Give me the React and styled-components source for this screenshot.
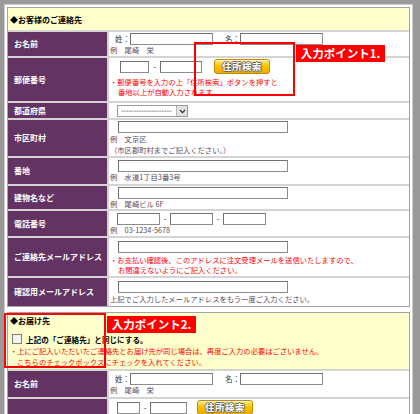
import React from 'react';
import styled, { createGlobalStyle } from 'styled-components';

const Global = createGlobalStyle`
  html, body { margin: 0; padding: 0; background: #9a9a9a; }
  body {
    width: 420px; height: 414px; overflow: hidden;
    font-family: "Noto Sans CJK JP", "Noto Sans", sans-serif;
  }
  * { box-sizing: border-box; }
`;

const Page = styled.div`
  position: relative;
  width: 420px;
  height: 414px;
  overflow: hidden;
  padding: 4px 0 0 4px;
`;

const Frame = styled.div`
  width: 409px;
  height: 440px;
  background: #fff;
  border: 1px solid #cfcfcf;
  padding: 2px;
`;

const Table = styled.div`
  display: grid;
  grid-template-columns: 99px 300px;
  grid-template-rows: ${p => p.$rows};
  gap: 2px;
  width: 403px;
  background: #d4d4d4;
  border: 1px solid #a3a3a3;
  margin-top: ${p => p.$mt || 0}px;
`;

const Header = styled.div`
  grid-column: 1 / -1;
  background: #ffffcc;
  padding: ${p => p.$pt || 0}px 0 0 2px;
  display: flex;
  flex-direction: column;
  justify-content: ${p => (p.$center ? 'center' : 'flex-start')};
  align-items: flex-start;
`;

const HeaderTitle = styled.div`
  font-size: 8px;
  line-height: 11px;
  font-weight: bold;
  color: #000;
  white-space: nowrap;
`;

const Label = styled.div`
  background: #633363;
  color: #fff;
  font-weight: bold;
  font-size: 8px;
  line-height: 10px;
  display: flex;
  align-items: center;
  padding-left: 6px;
  white-space: nowrap;
`;

const Value = styled.div`
  background: #fff;
  padding: ${p => p.$pt ?? 1}px 0 0 1px;
  display: flex;
  flex-direction: column;
  align-items: flex-start;
  overflow: hidden;
`;

const Line = styled.div`
  display: flex;
  align-items: center;
  height: ${p => p.$h || 12}px;
  padding-left: ${p => p.$indent || 0}px;
  margin-bottom: ${p => p.$mb || 0}px;
`;

const Field = styled.input`
  width: ${p => p.$w}px;
  height: 12px;
  margin: 0 ${p => p.$mr || 0}px 0 0;
  padding: 0 2px;
  border: 1px solid #8c8c8c;
  border-top-color: #727272;
  border-left-color: #727272;
  background: #fff;
  font-size: 7px;
  outline: none;
`;

const FieldTag = styled.span`
  font-size: 7.5px;
  line-height: 12px;
  color: #333;
  white-space: nowrap;
`;

const Dash = styled.span`
  width: ${p => p.$w}px;
  text-align: center;
  font-size: 8px;
  line-height: 12px;
  color: #333;
  font-family: "Liberation Sans", sans-serif;
`;

const Example = styled.div`
  font-size: 7.3px;
  line-height: 11px;
  color: #5a4a5a;
  white-space: nowrap;
`;

const Note = styled.div`
  font-size: 7.3px;
  line-height: ${p => p.$lh || 10}px;
  color: #f00;
  padding-left: ${p => p.$indent || 0}px;
  white-space: nowrap;
`;

const SearchButton = styled.button`
  width: 56px;
  height: 15px;
  margin: 0 0 0 ${p => p.$ml || 0}px;
  padding: 0;
  border: 1px solid #c08a00;
  border-radius: 3px;
  background: linear-gradient(#ffe98a 0%, #f8c400 45%, #eeaa00 100%);
  box-shadow: inset 0 1px 0 rgba(255, 255, 255, 0.7);
  color: #fff;
  font-family: "Noto Sans CJK JP", sans-serif;
  font-weight: bold;
  font-size: 9.5px;
  line-height: 13px;
  letter-spacing: 0.5px;
  text-shadow: -1px 0 #666, 1px 0 #666, 0 -1px #666, 0 1px #666;
  cursor: pointer;
`;

const SelectBox = styled.div`
  display: flex;
  width: 71px;
  height: 12px;
  margin-left: 7px;
  border: 1px solid #9a9a9a;
  background: #fff;
`;

const SelectText = styled.span`
  flex: 1;
  padding-left: 3px;
  font-family: "DejaVu Sans", sans-serif;
  font-size: 7px;
  line-height: 10px;
  color: #222;
  white-space: nowrap;
`;

const SelectArrow = styled.span`
  width: 11px;
  background: #e2e2e2;
  border-left: 1px solid #b8b8b8;
  display: flex;
  align-items: center;
  justify-content: center;
`;

const CheckRow = styled.label`
  display: flex;
  align-items: center;
  gap: 4px;
  height: 12px;
  margin: 7px 0 1px 2px;
`;

const Check = styled.input`
  appearance: none;
  width: 10px;
  height: 10px;
  margin: 0;
  border: 1px solid #7f7f7f;
  background: #f3f3f3;
`;

const CheckText = styled.span`
  font-size: 7.6px;
  font-weight: bold;
  color: #000;
  white-space: nowrap;
`;

const CalloutBox = styled.div`
  position: absolute;
  left: ${p => p.$x}px;
  top: ${p => p.$y}px;
  width: ${p => p.$w}px;
  height: ${p => p.$h}px;
  border: 2px solid #f00;
  pointer-events: none;
`;

const CalloutTag = styled.div`
  position: absolute;
  left: ${p => p.$x}px;
  top: ${p => p.$y}px;
  width: 89px;
  height: 17px;
  background: #f00;
  color: #fff;
  font-weight: bold;
  font-size: 11.5px;
  line-height: 17px;
  text-align: center;
  white-space: nowrap;
`;

const Chevron = () => (
  <svg width="7" height="5" viewBox="0 0 7 5">
    <path d="M1 1 L3.5 3.6 L6 1" fill="none" stroke="#333" strokeWidth="1.3" />
  </svg>
);

const NameLine = () => (
  <Line $indent={5}>
    <FieldTag>姓：</FieldTag>
    <Field $w={83} $mr={12} />
    <FieldTag>名：</FieldTag>
    <Field $w={83} />
  </Line>
);

export default function App() {
  return (
    <>
      <Global />
      <Page>
        <Frame>
          <Table $rows="22px 24px 43px 15px 36px 26px 23px 25px 38px 28px">
            <Header $center>
              <HeaderTitle>◆お客様のご連絡先</HeaderTitle>
            </Header>

            <Label>お名前</Label>
            <Value $pt={1}>
              <NameLine />
              <Example>例　尾崎　栄</Example>
            </Value>

            <Label>郵便番号</Label>
            <Value $pt={1}>
              <Line $h={15} $indent={10} $mb={3}>
                <Field $w={29} />
                <Dash $w={11}>-</Dash>
                <Field $w={42} />
                <SearchButton $ml={12}>住所検索</SearchButton>
              </Line>
              <Note>・郵便番号を入力の上「住所検索」ボタンを押すと</Note>
              <Note $indent={8}>番地以上が自動入力されます。</Note>
            </Value>

            <Label>都道府県</Label>
            <Value $pt={2}>
              <SelectBox>
                <SelectText>--------------------</SelectText>
                <SelectArrow><Chevron /></SelectArrow>
              </SelectBox>
            </Value>

            <Label>市区町村</Label>
            <Value $pt={1}>
              <Line $indent={8} $mb={1}>
                <Field $w={170} />
              </Line>
              <Example>例　文京区</Example>
              <Example>（市区郡町村までご記入ください。）</Example>
            </Value>

            <Label>番地</Label>
            <Value $pt={2}>
              <Line $indent={8}>
                <Field $w={170} />
              </Line>
              <Example>例　水道1丁目3番3号</Example>
            </Value>

            <Label>建物名など</Label>
            <Value $pt={1}>
              <Line $indent={8}>
                <Field $w={170} />
              </Line>
              <Example>例　尾崎ビル 6F</Example>
            </Value>

            <Label>電話番号</Label>
            <Value $pt={2}>
              <Line $indent={7}>
                <Field $w={43} />
                <Dash $w={10}>-</Dash>
                <Field $w={43} />
                <Dash $w={10}>-</Dash>
                <Field $w={43} />
              </Line>
              <Example>例　03-1234-5678</Example>
            </Value>

            <Label>ご連絡先メールアドレス</Label>
            <Value $pt={3}>
              <Line $indent={8} $mb={2}>
                <Field $w={170} />
              </Line>
              <Note>・お支払い確認後、このアドレスに注文受理メールを送信いたしますので、</Note>
              <Note $indent={8}>お間違えないようにご記入ください。</Note>
            </Value>

            <Label>確認用メールアドレス</Label>
            <Value $pt={3}>
              <Line $indent={8} $mb={1}>
                <Field $w={170} />
              </Line>
              <Example>上記でご入力したメールアドレスをもう一度ご入力ください。</Example>
            </Value>
          </Table>

          <Table $rows="56px 26px 40px" $mt={5}>
            <Header $pt={2}>
              <HeaderTitle>◆お届け先</HeaderTitle>
              <CheckRow>
                <Check type="checkbox" />
                <CheckText>上記の「ご連絡先」と同じにする。</CheckText>
              </CheckRow>
              <Note $lh={11}>・上にご記入いただいたご連絡先とお届け先が同じ場合は、再度ご入力の必要はございません。</Note>
              <Note $lh={11} $indent={7}>こちらのチェックボックスにチェックを入れてください。</Note>
            </Header>

            <Label>お名前</Label>
            <Value $pt={2}>
              <NameLine />
              <Example>例　尾崎　栄</Example>
            </Value>

            <Label>郵便番号</Label>
            <Value $pt={1}>
              <Line $h={15} $indent={7}>
                <Field $w={23} />
                <Dash $w={10}>-</Dash>
                <Field $w={37} />
                <SearchButton $ml={10}>住所検索</SearchButton>
              </Line>
            </Value>
          </Table>
        </Frame>

        <CalloutBox $x={194} $y={42} $w={101} $h={54} />
        <CalloutTag $x={296} $y={45}>入力ポイント1.</CalloutTag>
        <CalloutBox $x={4} $y={313} $w={102} $h={55} />
        <CalloutTag $x={107} $y={316}>入力ポイント2.</CalloutTag>
      </Page>
    </>
  );
}
